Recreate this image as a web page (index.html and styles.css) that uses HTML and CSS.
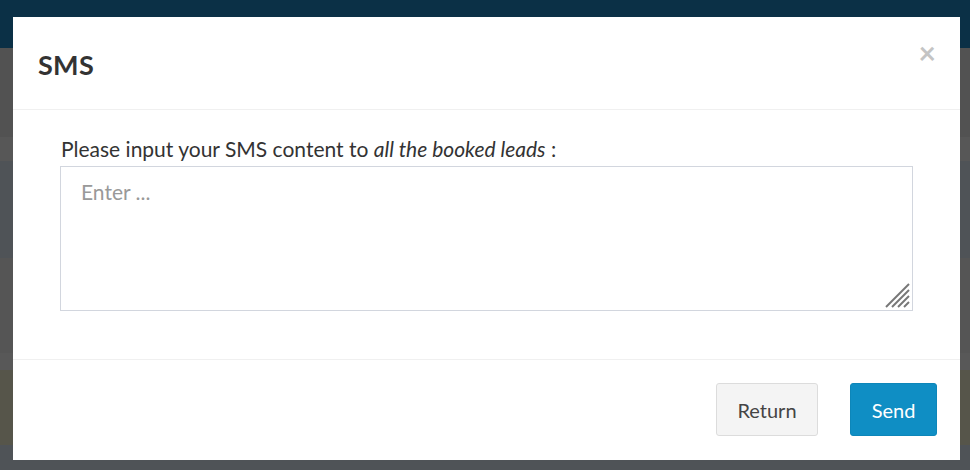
FILE: index.html
```html
<!DOCTYPE html>
<html>
<head>
<meta charset="utf-8">
<link rel="stylesheet" href="styles.css">
</head>
<body>
<div class="page">
  <div class="topbar"></div>
  <div class="band b1"></div>
  <div class="band b2"></div>
  <div class="band b3"></div>
  <div class="band b4"></div>
  <div class="band b5"></div>
  <div class="band b6"></div>
  <div class="band b7"></div>
</div>
<div class="overlay">
  <div class="modal">
    <div class="modal-header">
      <h4 class="modal-title">SMS</h4>
      <span class="close">&times;</span>
    </div>
    <div class="modal-body">
      <label class="label">Please input your SMS content to <em>all the booked leads</em> :</label>
      <div class="ta-wrap">
        <textarea class="ta" placeholder="Enter ..."></textarea>
        <svg class="grip" width="26" height="26" viewBox="0 0 26 26">
          <g stroke="#777" stroke-width="2" stroke-linecap="butt">
            <line x1="2" y1="25" x2="25" y2="2"/>
            <line x1="8" y1="25" x2="25" y2="8"/>
            <line x1="14" y1="25" x2="25" y2="14"/>
            <line x1="20" y1="25" x2="25" y2="20"/>
          </g>
        </svg>
      </div>
    </div>
    <div class="modal-footer">
      <button class="btn btn-default">Return</button>
      <button class="btn btn-primary">Send</button>
    </div>
  </div>
</div>
</body>
</html>
```
FILE: styles.css
```css
html, body {
  margin: 0;
  padding: 0;
  width: 970px;
  height: 470px;
  overflow: hidden;
  font-family: "Lato", "Liberation Sans", sans-serif;
}
.page {
  display: flex;
  flex-direction: column;
  height: 470px;
}
.topbar { height: 48px; background: #0b3046; }
.band { flex: none; }
.b1 { height: 89px; background: #525252; }
.b2 { height: 24px; background: #575757; }
.b3 { height: 97px; background: #4f5357; }
.b4 { height: 95px; background: #555555; }
.b5 { height: 17px; background: #585858; }
.b6 { height: 75px; background: #56554a; }
.b7 { height: 25px; background: #4f5357; }

.overlay {
  position: absolute;
  left: 0;
  top: 0;
  width: 970px;
  height: 470px;
}
.modal {
  margin: 17px 0 0 13px;
  width: 947px;
  height: 443px;
  background: #fff;
  display: flex;
  flex-direction: column;
}
.modal-header {
  height: 93px;
  border-bottom: 1px solid #f0f0f0;
  display: flex;
  align-items: flex-start;
  justify-content: space-between;
  padding: 0 24px 0 25px;
  box-sizing: border-box;
  flex: none;
}
.modal-title {
  margin: 31px 0 0 0;
  font-size: 27px;
  font-weight: 700;
  color: #333;
  line-height: 34px;
  letter-spacing: 0.3px;
}
.close {
  margin-top: 20px;
  font-size: 30px;
  font-weight: 700;
  color: #c4c4c4;
  line-height: 30px;
}
.modal-body {
  height: 250px;
  border-bottom: 1px solid #f0f0f0;
  box-sizing: border-box;
  padding: 27px 47px 0 47px;
  flex: none;
}
.label {
  display: block;
  font-size: 21px;
  color: #333;
  line-height: 24px;
  margin-left: 1px;
  margin-bottom: 5px;
}
.label em { font-style: italic; }
.ta-wrap {
  position: relative;
  height: 145px;
}
.ta {
  display: block;
  width: 100%;
  height: 145px;
  box-sizing: border-box;
  border: 1px solid #d2d6de;
  padding: 12px 20px;
  font-family: "Lato", "Liberation Sans", sans-serif;
  font-size: 21px;
  color: #555;
  resize: none;
  outline: none;
  margin: 0;
}
.ta::placeholder { color: #999; }
.grip {
  position: absolute;
  right: 3px;
  bottom: 3px;
}
.modal-footer {
  flex: 1;
  display: flex;
  justify-content: flex-end;
  align-items: flex-start;
  gap: 32px;
  padding: 23px 23px 0 0;
}
.btn {
  height: 53px;
  border-radius: 3px;
  font-family: "Lato", "Liberation Sans", sans-serif;
  font-size: 20px;
  padding: 0;
  margin: 0;
}
.btn-default {
  width: 102px;
  background: #f4f4f4;
  border: 1px solid #dcdcdc;
  color: #444;
}
.btn-primary {
  width: 87px;
  background: #0f8ec4;
  border: 1px solid #0d86b9;
  color: #fff;
}
```
